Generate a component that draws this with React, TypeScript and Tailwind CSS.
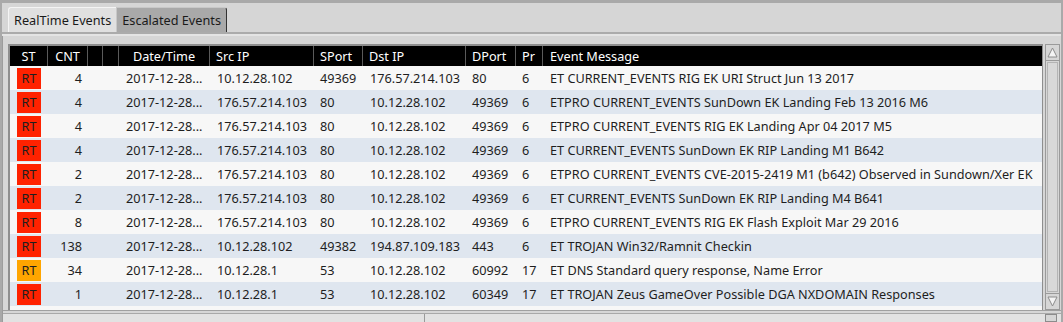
import React from "react"

type Row = {
  lvl: "high" | "med"
  cnt: number
  time: string
  src: string
  sport: string
  dst: string
  dport: string
  pr: string
  msg: string
}

const rows: Row[] = [
  { lvl: "high", cnt: 4, time: "2017-12-28...", src: "10.12.28.102", sport: "49369", dst: "176.57.214.103", dport: "80", pr: "6", msg: "ET CURRENT_EVENTS RIG EK URI Struct Jun 13 2017" },
  { lvl: "high", cnt: 4, time: "2017-12-28...", src: "176.57.214.103", sport: "80", dst: "10.12.28.102", dport: "49369", pr: "6", msg: "ETPRO CURRENT_EVENTS SunDown EK Landing Feb 13 2016 M6" },
  { lvl: "high", cnt: 4, time: "2017-12-28...", src: "176.57.214.103", sport: "80", dst: "10.12.28.102", dport: "49369", pr: "6", msg: "ETPRO CURRENT_EVENTS RIG EK Landing Apr 04 2017 M5" },
  { lvl: "high", cnt: 4, time: "2017-12-28...", src: "176.57.214.103", sport: "80", dst: "10.12.28.102", dport: "49369", pr: "6", msg: "ET CURRENT_EVENTS SunDown EK RIP Landing M1 B642" },
  { lvl: "high", cnt: 2, time: "2017-12-28...", src: "176.57.214.103", sport: "80", dst: "10.12.28.102", dport: "49369", pr: "6", msg: "ETPRO CURRENT_EVENTS CVE-2015-2419 M1 (b642) Observed in Sundown/Xer EK" },
  { lvl: "high", cnt: 2, time: "2017-12-28...", src: "176.57.214.103", sport: "80", dst: "10.12.28.102", dport: "49369", pr: "6", msg: "ET CURRENT_EVENTS SunDown EK RIP Landing M4 B641" },
  { lvl: "high", cnt: 8, time: "2017-12-28...", src: "176.57.214.103", sport: "80", dst: "10.12.28.102", dport: "49369", pr: "6", msg: "ETPRO CURRENT_EVENTS RIG EK Flash Exploit Mar 29 2016" },
  { lvl: "high", cnt: 138, time: "2017-12-28...", src: "10.12.28.102", sport: "49382", dst: "194.87.109.183", dport: "443", pr: "6", msg: "ET TROJAN Win32/Ramnit Checkin" },
  { lvl: "med", cnt: 34, time: "2017-12-28...", src: "10.12.28.1", sport: "53", dst: "10.12.28.102", dport: "60992", pr: "17", msg: "ET DNS Standard query response, Name Error" },
  { lvl: "high", cnt: 1, time: "2017-12-28...", src: "10.12.28.1", sport: "53", dst: "10.12.28.102", dport: "60349", pr: "17", msg: "ET TROJAN Zeus GameOver Possible DGA NXDOMAIN Responses" },
]

const cols = "grid grid-cols-[38px_40px_15px_16px_91px_104px_49px_103px_50px_27px_1fr]"

function Header() {
  const h = "h-[20px] flex items-center border-r border-[#5a5a5a] text-white"
  return (
    <div className={`${cols} bg-black`}>
      <div className={`${h} justify-center`}>ST</div>
      <div className={`${h} justify-center`}>CNT</div>
      <div className={h} />
      <div className={h} />
      <div className={`${h} justify-center`}>Date/Time</div>
      <div className={`${h} pl-[6px]`}>Src IP</div>
      <div className={`${h} pl-[6px]`}>SPort</div>
      <div className={`${h} pl-[6px]`}>Dst IP</div>
      <div className={`${h} pl-[6px]`}>DPort</div>
      <div className={`${h} pl-[6px]`}>Pr</div>
      <div className="h-[20px] flex items-center pl-[7px] text-white">Event Message</div>
    </div>
  )
}

function EventRow({ r, i }: { r: Row; i: number }) {
  const c = "h-[24px] flex items-center whitespace-nowrap overflow-hidden"
  return (
    <div className={`${cols} text-[#1e1e1e] ${i % 2 === 0 ? "bg-[#f7f7f7]" : "bg-[#dfe6ef]"}`}>
      <div className={`${c} justify-center`}>
        <span
          className={`w-[24px] h-[21px] flex items-center justify-center ${
            r.lvl === "high" ? "bg-[#ff2200]" : "bg-[#ffa500]"
          }`}
        >
          RT
        </span>
      </div>
      <div className={`${c} justify-end pr-[6px]`}>{r.cnt}</div>
      <div className={c} />
      <div className={c} />
      <div className={`${c} pl-[7px]`}>{r.time}</div>
      <div className={`${c} pl-[7px]`}>{r.src}</div>
      <div className={`${c} pl-[6px]`}>{r.sport}</div>
      <div className={`${c} pl-[7px]`}>{r.dst}</div>
      <div className={`${c} pl-[6px]`}>{r.dport}</div>
      <div className={`${c} pl-[6px]`}>{r.pr}</div>
      <div className={`${c} pl-[7px]`}>{r.msg}</div>
    </div>
  )
}

function ScrollBar() {
  return (
    <div className="w-[15px] h-[266px] flex flex-col border border-[#9a9a9a] bg-[#d6d6d6]">
      <div className="h-[16px] flex items-center justify-center border-b border-[#9a9a9a]">
        <svg width="11" height="11" viewBox="0 0 11 11">
          <path d="M5.5 1 L10 10 L1 10 Z" fill="#f4f4f4" stroke="#8c8c8c" strokeWidth="1" />
        </svg>
      </div>
      <div className="flex-1 m-[1px] border border-[#b4b4b4] bg-[#d8d8d8]" />
      <div className="h-[16px] flex items-center justify-center border-t border-[#9a9a9a]">
        <svg width="11" height="11" viewBox="0 0 11 11">
          <path d="M1 1 L10 1 L5.5 10 Z" fill="#f4f4f4" stroke="#8c8c8c" strokeWidth="1" />
        </svg>
      </div>
    </div>
  )
}

export default function App() {
  return (
    <div
      className="w-[1063px] h-[322px] overflow-hidden bg-[#a9a9a9] pt-[3px] text-[12.7px] leading-none"
      style={{ fontFamily: '"Noto Sans", "DejaVu Sans", sans-serif' }}
    >
      <div className="h-full mx-[2px] bg-[#d6d6d6] flex flex-col">
        {/* tabs */}
        <div className="flex items-end h-[31px] pl-[6px] border-b-[2px] border-[#ababab]">
          <div className="h-[25px] px-[5px] flex items-center bg-[#e0e0e0] border-t border-l border-[#f4f4f4] rounded-tl-[3px] text-[#1a1a1a]">
            RealTime Events
          </div>
          <div className="h-[25px] px-[5px] flex items-center bg-[#a9a9a9] border-t border-l border-r border-[#c8c8c8] rounded-tr-[3px] border-r-[#333] text-[#1a1a1a]">
            Escalated Events
          </div>
        </div>
        <div className="h-[2px] bg-[#e4e4e4]" />
        {/* content */}
        <div className="flex-1 flex flex-col border-l border-[#9c9c9c]">
          <div className="flex gap-[2px] pl-[5px] pt-[8px]">
            <div className="w-[1035px] h-[266px] border-[2px] border-[#8e8e8e] border-b-0 border-r-[1px] bg-[#f7f7f7] overflow-hidden">
              <Header />
              {rows.map((r, i) => (
                <EventRow key={i} r={r} i={i} />
              ))}
            </div>
            <ScrollBar />
          </div>
          <div className="h-[3px] border-t border-[#a0a0a0] bg-[#d6d6d6]" />
          <div className="flex-1 flex border-t border-[#a8a8a8] bg-[#e2e2e2]">
            <div className="w-[422px] border-r border-[#9a9a9a]" />
            <div className="flex-1" />
            <div className="w-[12px] mr-[4px] border border-[#8c8c8c] bg-[#d6d6d6]" />
          </div>
        </div>
      </div>
    </div>
  )
}
